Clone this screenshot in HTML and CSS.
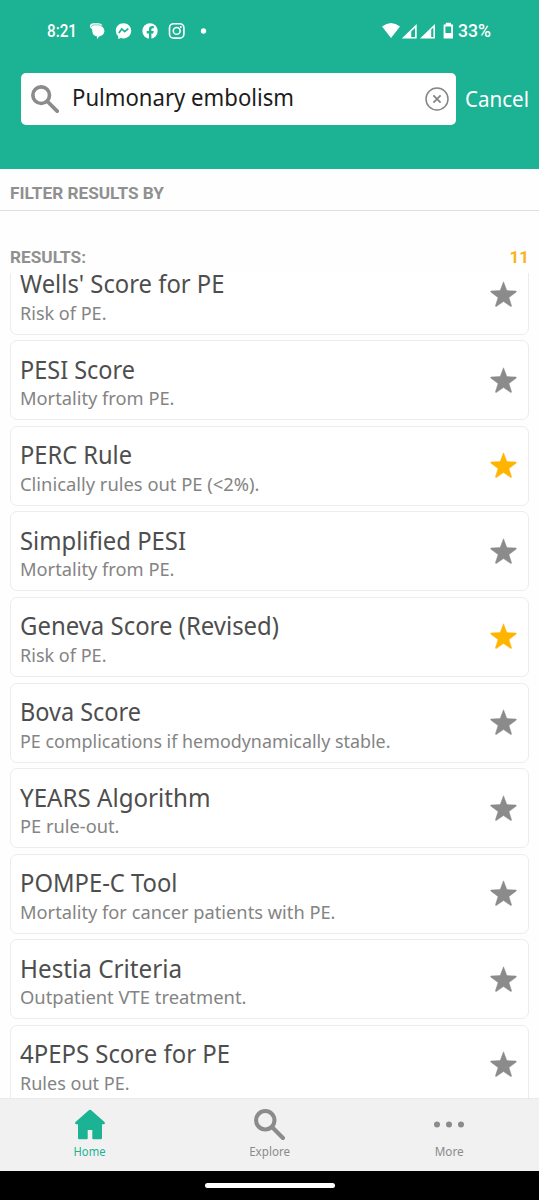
FILE: index.html
```html
<!DOCTYPE html>
<html lang="en">
<head>
<meta charset="utf-8">
<title>Search results</title>
<link rel="stylesheet" href="styles.css">
</head>
<body>
<svg class="defs" width="0" height="0">
  <symbol id="star" viewBox="0 0 27 26"><path d="M13.5.8 16.8 9.6 26 10Q26.7 10.5 26 11.2L18.9 16.6 21.6 25Q21.3 25.8 20.5 25.3L13.5 20.6 6.5 25.3Q5.7 25.8 5.4 25L8.1 16.6 1 11.2Q.3 10.5 1 10L10.2 9.6Z" fill="currentColor" stroke="currentColor" stroke-width=".5" stroke-linejoin="round"/></symbol>
  <symbol id="search" viewBox="0 0 30 30"><circle cx="10.9" cy="10.9" r="8.9" fill="none" stroke="currentColor" stroke-width="3.9"/><path d="M17.4 17.4 28 28" stroke="currentColor" stroke-width="4" stroke-linecap="round"/></symbol>
</svg>
<header class="header">
  <div class="status">
    <span class="clock fit" data-width="30">8:21</span>
    <svg class="notices" width="120" height="18" viewBox="0 0 120 18" fill="#fff">
      <path d="M2.2 3.4H9.6A5.6 5.6 0 0 1 15.4 8.8C15.4 12 12.8 14.2 10 14.4L8 17.2V14.4C4.8 14 3.4 11.7 3.4 9.4Q3.4 6.6 .9 4.9Q.5 1.2 4.6 1.2H9.5Q12 1.2 13.6 3.4Z"/><path d="M2.4 4.9Q2.7 2.9 5 2.9H11" fill="none" stroke="#1cb294" stroke-width=".6"/>
      <path d="M34.5 1.2C30 1.2 26.8 4.4 26.8 8.8Q26.8 12.3 29.3 14.6V17L31.8 16Q33 16.4 34.5 16.4C39 16.4 42.2 13.2 42.2 8.8S39 1.2 34.5 1.2Z"/><path d="m29.8 11 3-4.1 2.9 2.7 3.6-2.9" fill="none" stroke="#1cb294" stroke-width="1.7"/>
      <circle cx="61" cy="9" r="7.7"/><path d="M60 17V11.4H57.8V8.9H60V7.2Q60 4 63.2 4H64.8V6.2H63.6Q62.4 6.2 62.4 7.4V8.9H64.7L64.3 11.4H62.4V17Z" fill="#1cb294"/>
      <g fill="none" stroke="#fff" stroke-width="1.6"><rect x="80.5" y="1.7" width="14.4" height="14.4" rx="4.2"/><circle cx="87.7" cy="8.9" r="3.4"/></g><circle cx="91.8" cy="4.9" r="1"/>
      <circle cx="114.5" cy="9" r="2.7"/>
    </svg>
    <svg class="signals" width="72" height="18" viewBox="0 0 72 18" fill="#fff">
      <path d="M0 4.5Q9-2.6 18 4.5L9 16Z"/>
      <path d="m19.7 16.6 15-14.6v14.6Z"/><path d="M29.2 9.6 33 5.9V14.9H29.2Z" fill="#1cb294"/>
      <path d="m38 16.6 15-14.6v14.6Z"/><path d="M49.2 7.6 51.4 5.5V14.9H49.2Z" fill="#1cb294"/>
      <path fill-rule="evenodd" d="M63.8.7H69V2.5H71V16.5H61.6V2.5H63.8ZM63.4 4.5V11H69.2V4.5Z"/>
    </svg>
    <span class="battery fit" data-width="33">33%</span>
  </div>
  <div class="searchbar">
    <div class="field">
      <svg class="field-icon" width="28" height="28"><use href="#search"/></svg>
      <span class="query"><span class="fit" data-width="222">Pulmonary embolism</span></span>
      <svg width="24" height="24" viewBox="0 0 24 24" fill="none" stroke="#858585"><circle cx="12" cy="12" r="11" stroke-width="1.5"/><path d="m8.4 8.4 7.2 7.2m0-7.2-7.2 7.2" stroke-width="1.8"/></svg>
    </div>
    <span class="cancel fit" data-width="64">Cancel</span>
  </div>
</header>
<div class="filter"><span class="fit" data-width="154">FILTER RESULTS BY</span></div>
<div class="results"><span class="fit" data-width="76">RESULTS:</span><span class="count">11</span></div>
<main class="list">
  <article class="card"><div><h2><span class="fit" data-width="204.5">Wells' Score for PE</span></h2><p><span class="fit" data-width="86.5">Risk of PE.</span></p></div><svg class="star"><use href="#star"/></svg></article>
  <article class="card"><div><h2><span class="fit" data-width="115">PESI Score</span></h2><p><span class="fit" data-width="154.5">Mortality from PE.</span></p></div><svg class="star"><use href="#star"/></svg></article>
  <article class="card"><div><h2><span class="fit" data-width="112">PERC Rule</span></h2><p><span class="fit" data-width="239.5">Clinically rules out PE (&lt;2%).</span></p></div><svg class="star on"><use href="#star"/></svg></article>
  <article class="card"><div><h2><span class="fit" data-width="166">Simplified PESI</span></h2><p><span class="fit" data-width="154.5">Mortality from PE.</span></p></div><svg class="star"><use href="#star"/></svg></article>
  <article class="card"><div><h2><span class="fit" data-width="259">Geneva Score (Revised)</span></h2><p><span class="fit" data-width="86.5">Risk of PE.</span></p></div><svg class="star on"><use href="#star"/></svg></article>
  <article class="card"><div><h2><span class="fit" data-width="121">Bova Score</span></h2><p><span class="fit" data-width="370.5">PE complications if hemodynamically stable.</span></p></div><svg class="star"><use href="#star"/></svg></article>
  <article class="card"><div><h2><span class="fit" data-width="190.5">YEARS Algorithm</span></h2><p><span class="fit" data-width="99.5">PE rule-out.</span></p></div><svg class="star"><use href="#star"/></svg></article>
  <article class="card"><div><h2><span class="fit" data-width="157.5">POMPE-C Tool</span></h2><p><span class="fit" data-width="315.5">Mortality for cancer patients with PE.</span></p></div><svg class="star"><use href="#star"/></svg></article>
  <article class="card"><div><h2><span class="fit" data-width="162">Hestia Criteria</span></h2><p><span class="fit" data-width="226.5">Outpatient VTE treatment.</span></p></div><svg class="star"><use href="#star"/></svg></article>
  <article class="card"><div><h2><span class="fit" data-width="210">4PEPS Score for PE</span></h2><p><span class="fit" data-width="109.5">Rules out PE.</span></p></div><svg class="star"><use href="#star"/></svg></article>
</main>
<nav class="tabs">
  <div class="tab active"><svg width="30" height="30" viewBox="0 0 30 30" fill="currentColor"><path d="M15 .2Q15.7.2 16.2.7L29.5 12.4Q30.6 14.6 28.7 14.7H27V28.5Q27 29.7 25.8 29.7H18.2Q17.3 29.7 17.3 28.7V20.5H12.7V28.7Q12.7 29.7 11.8 29.7H4.2Q3 29.7 3 28.5V14.7H1.3Q-.6 14.6.5 12.4L13.8.7Q14.3.2 15 .2Z"/></svg><span class="fit center" data-width="32">Home</span></div>
  <div class="tab"><svg width="31" height="31"><use href="#search"/></svg><span class="fit center" data-width="41">Explore</span></div>
  <div class="tab"><svg width="32" height="30" viewBox="0 0 32 30" fill="currentColor"><circle cx="4" cy="15" r="3"/><circle cx="16" cy="15" r="3"/><circle cx="28" cy="15" r="3"/></svg><span class="fit center" data-width="29">More</span></div>
</nav>
<div class="system"><div class="handle"></div></div>
<script src="fit.js"></script>
</body>
</html>
```
FILE: styles.css
```css
* { box-sizing: border-box; }
body { margin: 0; width: 539px; height: 1200px; overflow: hidden; display: flex; flex-direction: column; background: #fefefe; font-family: "Noto Sans", sans-serif; }
h2, p { margin: 0; font-weight: 400; }
svg { display: block; flex: none; }
.defs { position: absolute; }
.fit { display: inline-block; white-space: nowrap; transform-origin: left center; }
.fit.center { transform-origin: center; }
.header { height: 169px; background: #1cb294; color: #fff; flex: none; }
.status { height: 73px; padding: 22px 0 0 47px; display: flex; align-items: flex-start; font: 500 17.5px/18px Roboto, sans-serif; }
.clock { width: 30px; }
.notices { margin-left: 12px; }
.signals { margin-left: 173px; }
.battery { margin-left: 4px; }
.searchbar { display: flex; align-items: center; padding-left: 21px; }
.field { width: 435px; height: 52px; padding: 0 7px 0 10px; background: #fff; border-radius: 5px; display: flex; align-items: center; }
.field-icon { color: #8b8b8b; }
.query { flex: 1; padding: 0 0 4px 13px; font-size: 24px; line-height: 30px; color: #1c1c1c; }
.cancel { margin-left: 9px; font-size: 22.5px; line-height: 30px; }
.filter { height: 42px; flex: none; padding: 14px 10px 0; border-bottom: 1px solid #dedede; font: 700 17px/20px Roboto, sans-serif; color: #909090; }
.results { height: 62px; flex: none; padding: 36px 10px 0; display: flex; justify-content: space-between; font: 700 17px/20px Roboto, sans-serif; color: #909090; }
.count { color: #f5b51d; }
.list { height: 825px; flex: none; overflow: hidden; padding: 0 10px; }
.card { height: 80px; margin-bottom: 5.6px; padding: 12.4px 11.5px 0 9px; display: flex; justify-content: space-between; background: #fff; border: 1px solid #ececec; border-radius: 7px; }
.card:first-child { margin-top: -18.3px; }
.card h2 { height: 30px; font-size: 26px; line-height: 30px; color: #4e4e4e; }
.card p { height: 22px; margin-top: 3.6px; font-size: 18.8px; line-height: 22px; color: #848484; }
.star { width: 27px; height: 26px; margin-top: 13px; color: #8b8b8b; }
.star.on { color: #ffb400; }
.tabs { height: 73px; flex: none; display: flex; background: #f1f1f1; border-top: 1px solid #e9e9e9; color: #8b8b8b; }
.tab { flex: 1; display: flex; flex-direction: column; align-items: center; padding-top: 10px; font-size: 12.3px; line-height: 18px; }
.tab svg { height: 31px; }
.tab span { margin-top: 3px; }
.tab.active { color: #1cb294; }
.system { flex: 1; background: #000; padding-top: 12px; }
.handle { width: 130px; height: 5px; margin: 0 auto; border-radius: 3px; background: #fff; }
```
FILE: fit.js
```js
// Condense each label to the width given in its data-width attribute.
document.querySelectorAll('.fit').forEach(function (el) {
  var range = document.createRange();
  range.selectNodeContents(el);
  var natural = range.getBoundingClientRect().width;
  var wanted = Number(el.dataset.width);
  if (!el.classList.contains('center')) el.style.width = wanted + 'px';
  el.style.transform = 'scaleX(' + wanted / natural + ')';
});
```
